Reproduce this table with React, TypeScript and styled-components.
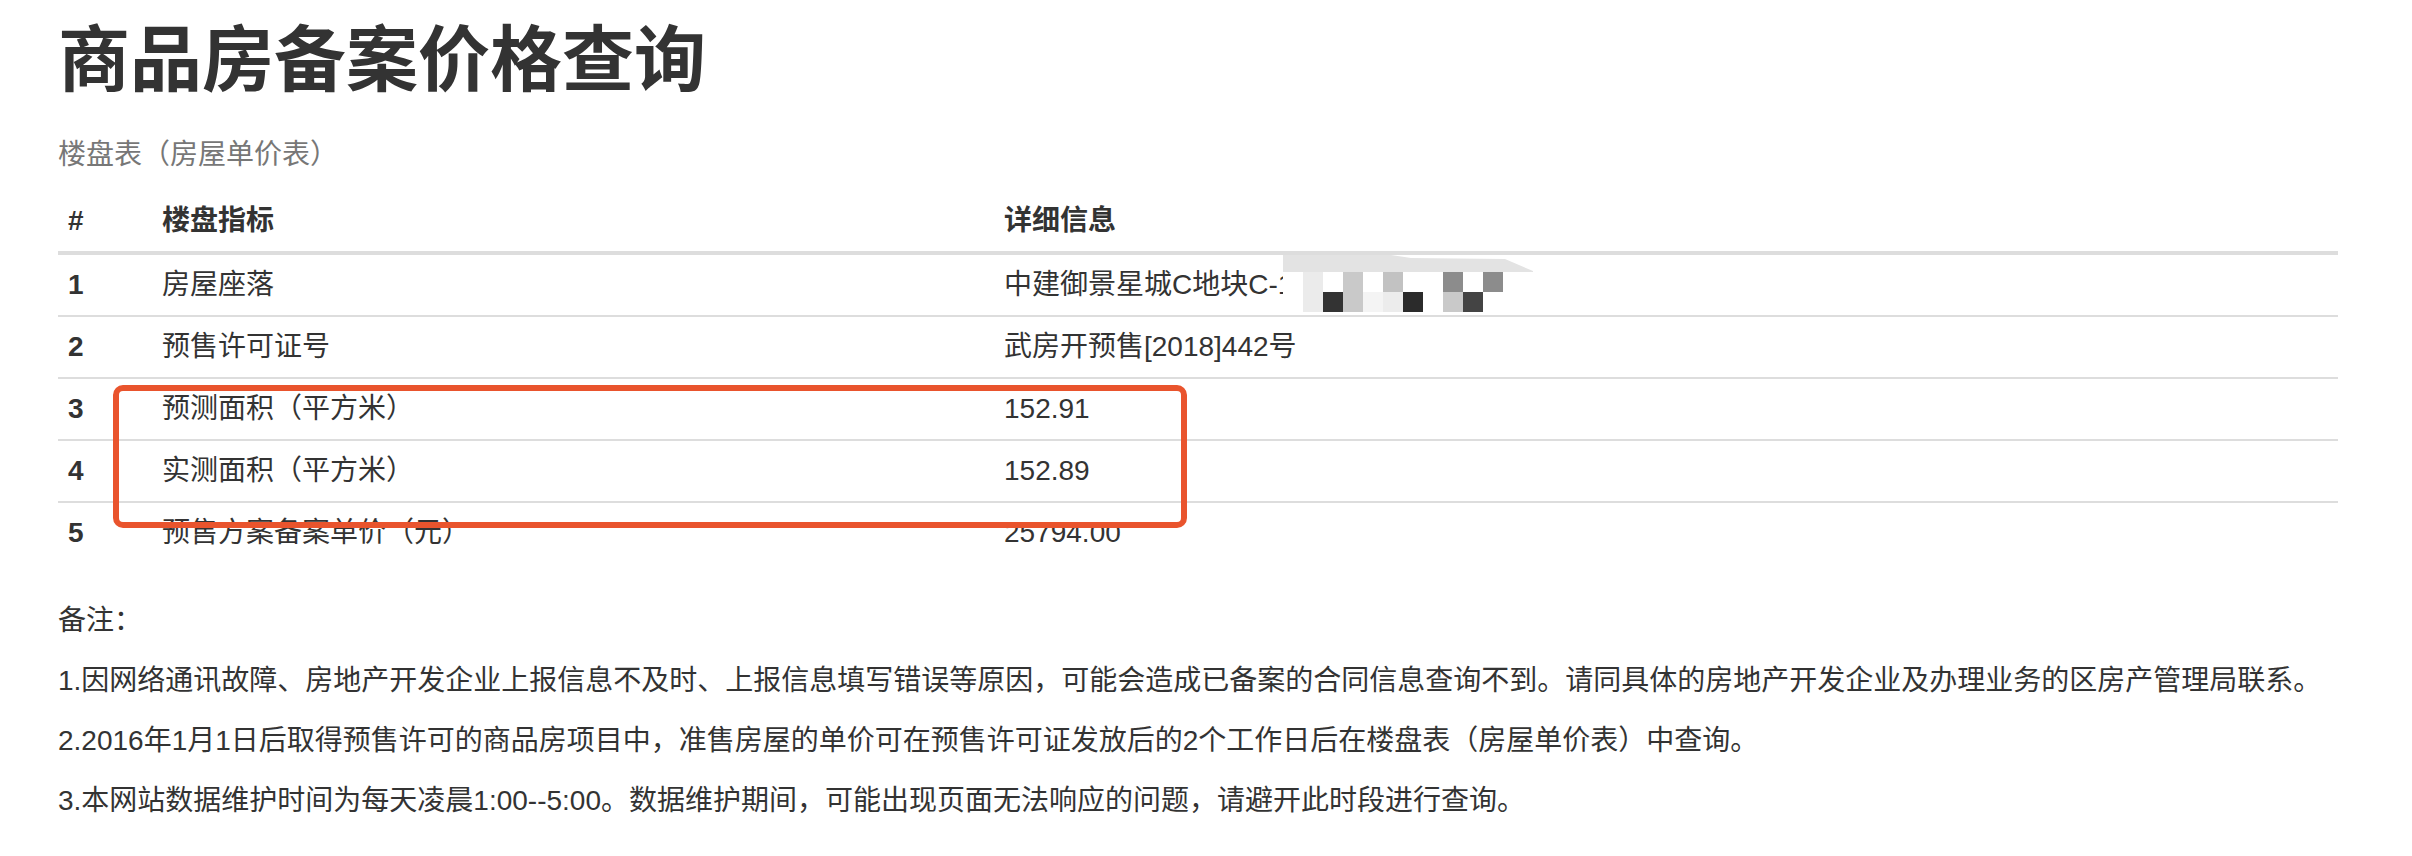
import React from 'react';
import styled, { createGlobalStyle } from 'styled-components';

const GlobalStyle = createGlobalStyle`
  html, body { margin: 0; padding: 0; background: #fff; }
  body {
    font-family: "Liberation Sans", "Noto Sans CJK SC", sans-serif;
    color: #333;
    font-size: 28px;
    line-height: 40px;
  }
`;

const Page = styled.div`
  width: 2280px;
  padding: 20px 74px 0 58px;
`;

const Title = styled.h1`
  margin: 0;
  font-size: 72px;
  line-height: 80px;
  font-weight: 700;
  color: #333;
`;

const Caption = styled.div`
  margin-top: 35px;
  padding-bottom: 16px;
  line-height: 40px;
  color: #777;
`;

const Table = styled.div`
  position: relative;
`;

const Row = styled.div<{ $head?: boolean; $first?: boolean }>`
  display: grid;
  grid-template-columns: 94px 842px 1fr;
  align-items: center;
  height: 60px;
  border-top: ${(p) => (p.$head || p.$first ? 'none' : '2px solid #ddd')};
  border-bottom: ${(p) => (p.$head ? '4px solid #ddd' : 'none')};
  font-weight: ${(p) => (p.$head ? 700 : 400)};
`;

const Cell = styled.div`
  position: relative;
  padding: 0 10px;
  white-space: nowrap;
`;

const Mosaic = styled.svg`
  position: absolute;
  left: 289px;
  top: -10px;
`;

const Highlight = styled.div`
  position: absolute;
  left: 55px;
  top: 194px;
  width: 1074px;
  height: 143px;
  box-sizing: border-box;
  border: 6px solid #e9542d;
  border-radius: 10px;
  pointer-events: none;
`;

const Notes = styled.div`
  margin-top: 38px;
`;

const Note = styled.p`
  margin: 0 0 20px;
  line-height: 40px;
`;

const rowA = ['#ebebeb', '#fff', '#c9c9c9', '#fff', '#c2c2c2', '#fff', '#fff', '#8c8c8c', '#fff', '#8c8c8c'];
const rowB = ['#ebebeb', '#333', '#c9c9c9', '#f4f4f4', '#ececec', '#2b2b2b', '#fff', '#c9c9c9', '#444', '#fff'];

const Redaction = () => (
  <Mosaic width={250} height={57} viewBox="0 0 250 57">
    <rect x={0} y={0} width={250} height={57} fill="#fff" />
    <polygon points="0,0 108,0 128,3 222,4 250,16 250,17 0,17" fill="#e3e3e3" />
    {rowA.map((c, i) => (
      <rect key={'a' + i} x={20 + i * 20} y={17} width={20} height={20} fill={c} />
    ))}
    {rowB.map((c, i) => (
      <rect key={'b' + i} x={20 + i * 20} y={37} width={20} height={20} fill={c} />
    ))}
  </Mosaic>
);

const rows = [
  { n: '1', k: '房屋座落', v: '中建御景星城C地块C-1', redact: true },
  { n: '2', k: '预售许可证号', v: '武房开预售[2018]442号' },
  { n: '3', k: '预测面积（平方米）', v: '152.91' },
  { n: '4', k: '实测面积（平方米）', v: '152.89' },
  { n: '5', k: '预售方案备案单价（元）', v: '25794.00' },
];

const notes = [
  '备注：',
  '1.因网络通讯故障、房地产开发企业上报信息不及时、上报信息填写错误等原因，可能会造成已备案的合同信息查询不到。请同具体的房地产开发企业及办理业务的区房产管理局联系。',
  '2.2016年1月1日后取得预售许可的商品房项目中，准售房屋的单价可在预售许可证发放后的2个工作日后在楼盘表（房屋单价表）中查询。',
  '3.本网站数据维护时间为每天凌晨1:00--5:00。数据维护期间，可能出现页面无法响应的问题，请避开此时段进行查询。',
];

export default function App() {
  return (
    <>
      <GlobalStyle />
      <Page>
        <Title>商品房备案价格查询</Title>
        <Caption>楼盘表（房屋单价表）</Caption>
        <Table>
          <Row $head>
            <Cell>#</Cell>
            <Cell>楼盘指标</Cell>
            <Cell>详细信息</Cell>
          </Row>
          {rows.map((r, i) => (
            <Row key={r.n} $first={i === 0}>
              <Cell>
                <b>{r.n}</b>
              </Cell>
              <Cell>{r.k}</Cell>
              <Cell>
                {r.v}
                {r.redact && <Redaction />}
              </Cell>
            </Row>
          ))}
          <Highlight />
        </Table>
        <Notes>
          {notes.map((t) => (
            <Note key={t}>{t}</Note>
          ))}
        </Notes>
      </Page>
    </>
  );
}
